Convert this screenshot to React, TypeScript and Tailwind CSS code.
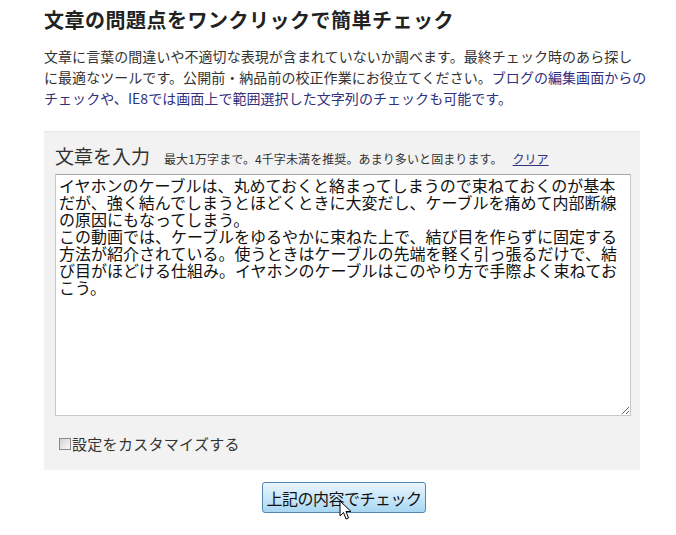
import React from 'react';

const jp = { fontFamily: '"Noto Sans CJK JP", "Noto Sans", sans-serif' };

const sample =
  'イヤホンのケーブルは、丸めておくと絡まってしまうので束ねておくのが基本だが、強く結んでしまうとほどくときに大変だし、ケーブルを痛めて内部断線の原因にもなってしまう。\nこの動画では、ケーブルをゆるやかに束ねた上で、結び目を作らずに固定する方法が紹介されている。使うときはケーブルの先端を軽く引っ張るだけで、結び目がほどける仕組み。イヤホンのケーブルはこのやり方で手際よく束ねておこう。';

function Cursor() {
  return (
    <svg className="absolute left-[76px] top-[17px]" width="13" height="21" viewBox="0 0 13 21">
      <path d="M1 1 L1 16 L4.5 12.5 L7 19 L9.5 18 L7 11.5 L12 11.5 Z" fill="#fff" stroke="#000" strokeWidth="1" strokeLinejoin="round" />
    </svg>
  );
}

export default function App() {
  return (
    <div className="w-[676px] h-[535px] bg-white overflow-hidden text-[#333]" style={jp}>
      <div className="ml-[44px] w-[596px] pt-[6px]">
        <h1 className="text-[20px] leading-[28px] font-bold text-[#222] tracking-[0.5px]">
          文章の問題点をワンクリックで簡単チェック
        </h1>

        <p className="mt-[12px] text-[14px] leading-[21px] tracking-[0.05px] whitespace-nowrap">
          文章に言葉の間違いや不適切な表現が含まれていないか調べます。最終チェック時のあら探し
          <br />
          に最適なツールです。公開前・納品前の校正作業にお役立てください。
          <span className="text-[#30307f]">ブログの編集画面からの</span>
          <br />
          <span className="text-[#30307f]">チェックや、IE8では画面上で範囲選択した文字列のチェックも可能です。</span>
        </p>

        <div className="mt-[22px] bg-[#f2f2f2] border-t border-[#e8e8e8] h-[339px] pl-[11px] pr-[9px] pt-[12px]">
          <div className="flex items-baseline h-[25px]">
            <span className="text-[19px] leading-[24px] text-[#333]">文章を入力</span>
            <span className="ml-[14px] text-[12px] leading-[24px] text-[#333] tracking-[0.1px]">
              最大1万字まで。4千字未満を推奨。あまり多いと固まります。
            </span>
            <a className="ml-[10px] text-[12px] leading-[24px] text-[#30307f] underline" href="#">
              クリア
            </a>
          </div>

          <textarea
            defaultValue={sample}
            className="mt-[5px] block w-[576px] h-[242px] border border-[#c8c8c8] border-t-[#a8a8a8] bg-white px-[3px] py-[2px] text-[16px] leading-[17px] text-[#111] outline-none"
            style={jp}
          />

          <label className="mt-[18px] flex items-center gap-[1px] text-[15px] leading-[20px] text-[#333]">
            <span className="inline-block w-[12px] h-[12px] border border-[#8a8a8a] bg-gradient-to-br from-[#d4d4d4] to-[#f8f8f8] ml-[4px]" />
            <span className="tracking-[0.3px]">設定をカスタマイズする</span>
          </label>
        </div>

        <div className="flex justify-center mt-[12px] pl-[4px]">
          <button
            className="relative w-[164px] h-[31px] rounded-[3px] border border-[#4f86b4] bg-gradient-to-b from-[#eaf6fd] to-[#a9d7f3] text-[16px] leading-[20px] text-[#111] tracking-[-0.5px]"
            style={jp}
          >
            上記の内容でチェック
            <Cursor />
          </button>
        </div>
      </div>
    </div>
  );
}
